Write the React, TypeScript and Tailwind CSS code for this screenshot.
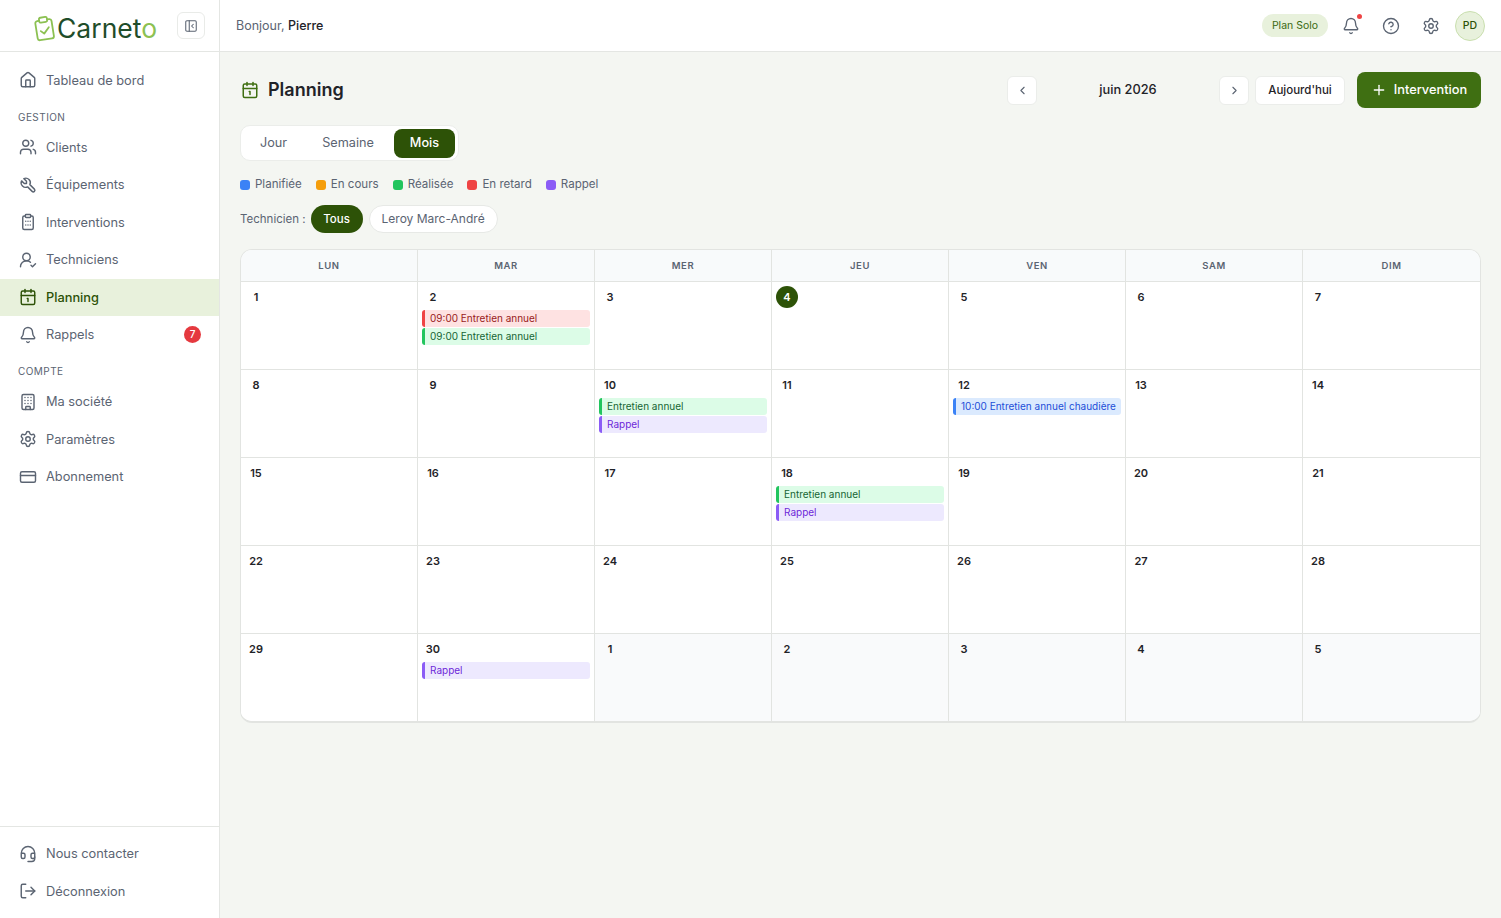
import React from "react";
import {
  House, Users, Calendar1, Bell, Building, Settings, CreditCard, UserRoundCheck,
  Headset, LogOut, PanelLeftClose, CircleHelp, ChevronLeft, ChevronRight, Plus,
} from "lucide-react";
import { TbTool } from "react-icons/tb";

const font = { fontFamily: "Inter, 'Liberation Sans', sans-serif" };

function ClipGrid({ size = 18, strokeWidth = 2, className = "" }: { size?: number; strokeWidth?: number; className?: string }) {
  return (
    <svg width={size} height={size} viewBox="0 0 24 24" fill="none" stroke="currentColor" strokeWidth={strokeWidth} strokeLinecap="round" strokeLinejoin="round" className={className}>
      <rect x="8.5" y="2" width="7" height="4" rx="1" />
      <path d="M15.5 4H17a2 2 0 0 1 2 2v14a2 2 0 0 1-2 2H7a2 2 0 0 1-2-2V6a2 2 0 0 1 2-2h1.5" />
      <path d="M9 11h.01M15 11h.01M9 16h.01M15 16h.01M12 11h.01M12 16h.01" />
    </svg>
  );
}

function LogoIcon() {
  return (
    <svg width="25" height="27" viewBox="0 0 25 27" fill="none" stroke="#8cc152" strokeWidth="1.8" strokeLinecap="round" strokeLinejoin="round" className="mt-[5px] shrink-0">
      <g transform="rotate(-9 12.5 14)">
        <path d="M8.5 5H6.5a2.2 2.2 0 0 0-2.2 2.2v15a2.2 2.2 0 0 0 2.2 2.2h12a2.2 2.2 0 0 0 2.2-2.2v-15A2.2 2.2 0 0 0 18.500 5h-2" />
        <rect x="8.500" y="2.200" width="8" height="5" rx="1.500" />
        <path d="M8.500 15.500l3 3 5.500-5.500" />
      </g>
    </svg>
  );
}

function NavItem({ icon: Icon, label, active, badge }: { icon: any; label: string; active?: boolean; badge?: string }) {
  return (
    <div className={`flex h-[37.5px] items-center pl-[18.500px] pr-[18px] text-[12.8px] ${active ? "bg-[#e8f1dc] font-medium text-[#2d5207]" : "text-[#5b6472]"}`}>
      <Icon size={18} strokeWidth={1.9} className={`shrink-0 ${active ? "text-[#2d5207]" : "text-[#5b6472]"}`} />
      <span className="ml-[9.500px]">{label}</span>
      {badge && (
        <span className="ml-auto flex h-[17px] w-[17px] items-center justify-center rounded-full bg-[#e5393f] text-[10px] font-medium text-white">{badge}</span>
      )}
    </div>
  );
}

function SectionLabel({ children }: { children: string }) {
  return <div className="flex h-[29.5px] items-center pl-[18px] pt-[7px] text-[10px] tracking-[0.45px] text-[#5b6472]">{children}</div>;
}

function Sidebar() {
  return (
    <aside className="flex w-[220px] shrink-0 flex-col border-r border-[#e4e6e3] bg-white">
      <div className="flex h-[52px] shrink-0 items-center border-b border-[#e4e6e3] pl-[32px] pr-[14px]">
        <LogoIcon />
        <span className="mt-[5px] text-[26.5px] font-normal leading-none text-[#1f4d2a]">
          Carnet<span className="text-[#8cc152]">o</span>
        </span>
        <button className="ml-auto flex h-[27px] w-[28px] items-center justify-center rounded-md border border-[#e9ebe8] bg-white">
          <PanelLeftClose size={14} strokeWidth={1.8} className="text-[#5b6472]" />
        </button>
      </div>
      <nav className="flex-1 pt-[9.5px]">
        <NavItem icon={House} label="Tableau de bord" />
        <SectionLabel>GESTION</SectionLabel>
        <NavItem icon={Users} label="Clients" />
        <NavItem icon={TbTool} label="Équipements" />
        <NavItem icon={ClipGrid} label="Interventions" />
        <NavItem icon={UserRoundCheck} label="Techniciens" />
        <NavItem icon={Calendar1} label="Planning" active />
        <NavItem icon={Bell} label="Rappels" badge="7" />
        <SectionLabel>COMPTE</SectionLabel>
        <NavItem icon={Building} label="Ma société" />
        <NavItem icon={Settings} label="Paramètres" />
        <NavItem icon={CreditCard} label="Abonnement" />
      </nav>
      <div className="border-t border-[#e4e6e3] pb-[8px] pt-[8px]">
        <NavItem icon={Headset} label="Nous contacter" />
        <NavItem icon={LogOut} label="Déconnexion" />
      </div>
    </aside>
  );
}

function Header() {
  return (
    <header className="flex h-[52px] shrink-0 items-center border-b border-[#e4e6e3] bg-white pl-[16px] pr-[16px]">
      <div className="pt-[1px] text-[12.5px] text-[#5b6472]">
        Bonjour, <span className="font-medium text-[#1f2328]">Pierre</span>
      </div>
      <div className="ml-auto flex items-center">
        <span className="flex h-[23px] w-[66px] items-center justify-center rounded-full bg-[#e8f1dc] pt-[1px] text-[10.5px] text-[#3b6a12]">Plan Solo</span>
        <span className="relative ml-[14px] flex h-[18px] w-[18px] items-center justify-center">
          <Bell size={18} strokeWidth={1.8} className="text-[#5b6472]" />
          <span className="absolute right-[-2px] top-[-3px] h-[5px] w-[5px] rounded-full bg-[#ef4444]" />
        </span>
        <CircleHelp size={18} strokeWidth={1.8} className="ml-[22px] text-[#5b6472]" />
        <Settings size={18} strokeWidth={1.8} className="ml-[22px] text-[#5b6472]" />
        <span className="ml-[15px] flex h-[30px] w-[30px] items-center justify-center rounded-full border border-[#c9dfae] bg-[#e8f1dc] pt-[1px] text-[10.5px] font-medium text-[#2d5207]">PD</span>
      </div>
    </header>
  );
}

const legend = [
  ["Planifiée", "bg-[#3b82f6]"],
  ["En cours", "bg-[#f59e0b]"],
  ["Réalisée", "bg-[#22c55e]"],
  ["En retard", "bg-[#ef4444]"],
  ["Rappel", "bg-[#8b5cf6]"],
];

const eventStyles: Record<string, string> = {
  red: "bg-[#fee2e2] border-[#ef4444] text-[#991b1b]",
  green: "bg-[#dcfce7] border-[#22c55e] text-[#166534]",
  blue: "bg-[#dbeafe] border-[#3b82f6] text-[#1d4ed8]",
  purple: "bg-[#ede9fe] border-[#8b5cf6] text-[#6d28d9]",
};

type Ev = [string, string];
type Cell = { d: string; out?: boolean; today?: boolean; ev?: Ev[] };

const cells: Cell[] = [
  { d: "1" },
  { d: "2", ev: [["red", "09:00 Entretien annuel"], ["green", "09:00 Entretien annuel"]] },
  { d: "3" },
  { d: "4", today: true },
  { d: "5" }, { d: "6" }, { d: "7" }, { d: "8" }, { d: "9" },
  { d: "10", ev: [["green", "Entretien annuel"], ["purple", "Rappel"]] },
  { d: "11" },
  { d: "12", ev: [["blue", "10:00 Entretien annuel chaudière"]] },
  { d: "13" }, { d: "14" }, { d: "15" }, { d: "16" }, { d: "17" },
  { d: "18", ev: [["green", "Entretien annuel"], ["purple", "Rappel"]] },
  { d: "19" }, { d: "20" }, { d: "21" }, { d: "22" }, { d: "23" }, { d: "24" }, { d: "25" }, { d: "26" }, { d: "27" }, { d: "28" },
  { d: "29" },
  { d: "30", ev: [["purple", "Rappel"]] },
  { d: "1", out: true }, { d: "2", out: true }, { d: "3", out: true }, { d: "4", out: true }, { d: "5", out: true },
];

function Calendar() {
  const days = ["LUN", "MAR", "MER", "JEU", "VEN", "SAM", "DIM"];
  return (
    <div className="mt-[16px] grid grid-cols-7 overflow-hidden rounded-[12px] border border-[#e2e4e1] border-b-2 bg-white">
      {days.map((d, i) => (
        <div key={d} className={`flex h-[32px] items-center justify-center border-b border-[#e2e4e1] bg-[#f8fafb] pt-[1px] text-[9.5px] font-semibold tracking-[0.6px] text-[#5b6472] ${i < 6 ? "border-r" : ""}`}>
          {d}
        </div>
      ))}
      {cells.map((c, i) => (
        <div
          key={i}
          className={`flex flex-col px-[4px] pt-[4px] ${i < 28 ? "h-[88px] border-b" : "h-[87px]"} ${i % 7 < 6 ? "border-r" : ""} border-[#e2e4e1] ${c.out ? "bg-[#f9fafb]" : "bg-white"}`}
        >
          <div className="flex h-[22px] w-[22px] items-center justify-center self-start text-[11px] font-semibold text-[#1f2328]">
            {c.today ? (
              <span className="flex h-[22px] w-[22px] items-center justify-center rounded-full bg-[#2d5207] text-white">{c.d}</span>
            ) : (
              c.d
            )}
          </div>
          {c.ev && (
            <div className="mt-[2px] flex flex-col gap-[1px]">
              {c.ev.map((e, j) => (
                <div key={j} className={`flex h-[17px] items-center overflow-hidden whitespace-nowrap rounded-[3px] border-l-[3px] pl-[5px] text-[10px] ${eventStyles[e[0]]}`}>
                  {e[1]}
                </div>
              ))}
            </div>
          )}
        </div>
      ))}
    </div>
  );
}

export default function App() {
  return (
    <div className="flex h-[918px] w-full overflow-hidden bg-[#f4f6f2]" style={font}>
      <Sidebar />
      <div className="flex min-w-0 flex-1 flex-col">
        <Header />
        <main className="flex-1 pl-[20px] pr-[20px] pt-[20px]">
          <div className="flex h-[36px] items-center">
            <Calendar1 size={18} strokeWidth={2} className="ml-[1px] text-[#3f6f12]" />
            <h1 className="ml-[9px] mt-[-1px] text-[18px] font-semibold text-[#1f2328]">Planning</h1>
            <div className="ml-auto flex items-center">
              <button className="flex h-[29px] w-[30px] items-center justify-center rounded-md border border-[#ebedea] bg-white">
                <ChevronLeft size={13} className="text-[#5b6472]" />
              </button>
              <span className="w-[182px] text-center text-[12.8px] font-medium text-[#1f2328]">juin 2026</span>
              <button className="flex h-[29px] w-[30px] items-center justify-center rounded-md border border-[#ebedea] bg-white">
                <ChevronRight size={13} className="text-[#5b6472]" />
              </button>
              <button className="ml-[6px] flex h-[29px] w-[90px] items-center justify-center rounded-md border border-[#ebedea] bg-white pt-[1px] text-[11.5px] font-medium text-[#1f2328]">Aujourd'hui</button>
              <button className="ml-[12px] flex h-[36px] w-[124px] items-center justify-center gap-[7px] rounded-lg bg-[#3f6f12] text-[12.8px] font-medium text-white">
                <Plus size={16} strokeWidth={2} /> Intervention
              </button>
            </div>
          </div>

          <div className="mt-[17px] flex h-[36px] w-fit items-center rounded-[10px] border border-[#ebedea] bg-white px-[3px]">
            <span className="flex h-[29px] w-[59px] items-center justify-center text-[12.7px] text-[#5b6472]">Jour</span>
            <span className="flex h-[29px] w-[91px] items-center justify-center pr-[1px] text-[12.7px] text-[#5b6472]">Semaine</span>
            <span className="flex h-[29px] w-[61px] items-center justify-center rounded-lg bg-[#2d5207] text-[12.7px] font-medium text-white">Mois</span>
          </div>

          <div className="mt-[16px] flex h-[16px] items-center gap-[14px]">
            {legend.map(([label, cls]) => (
              <div key={label} className="flex items-center gap-[5px] text-[11.55px] text-[#5b6472]">
                <span className={`h-[10px] w-[10px] rounded-[3px] ${cls}`} />
                {label}
              </div>
            ))}
          </div>

          <div className="mt-[12px] flex h-[28px] items-center">
            <span className="pt-[1px] text-[11.5px] text-[#5b6472]">Technicien :</span>
            <span className="ml-[5px] flex h-[28px] w-[52px] items-center justify-center rounded-full bg-[#2d5207] pt-[1px] text-[11.5px] font-medium text-white">Tous</span>
            <span className="ml-[6px] flex h-[28px] w-[129px] items-center justify-center rounded-full border border-[#e7e9e6] bg-white text-[12px] text-[#5b6472]">Leroy Marc-André</span>
          </div>

          <Calendar />
        </main>
      </div>
    </div>
  );
}
